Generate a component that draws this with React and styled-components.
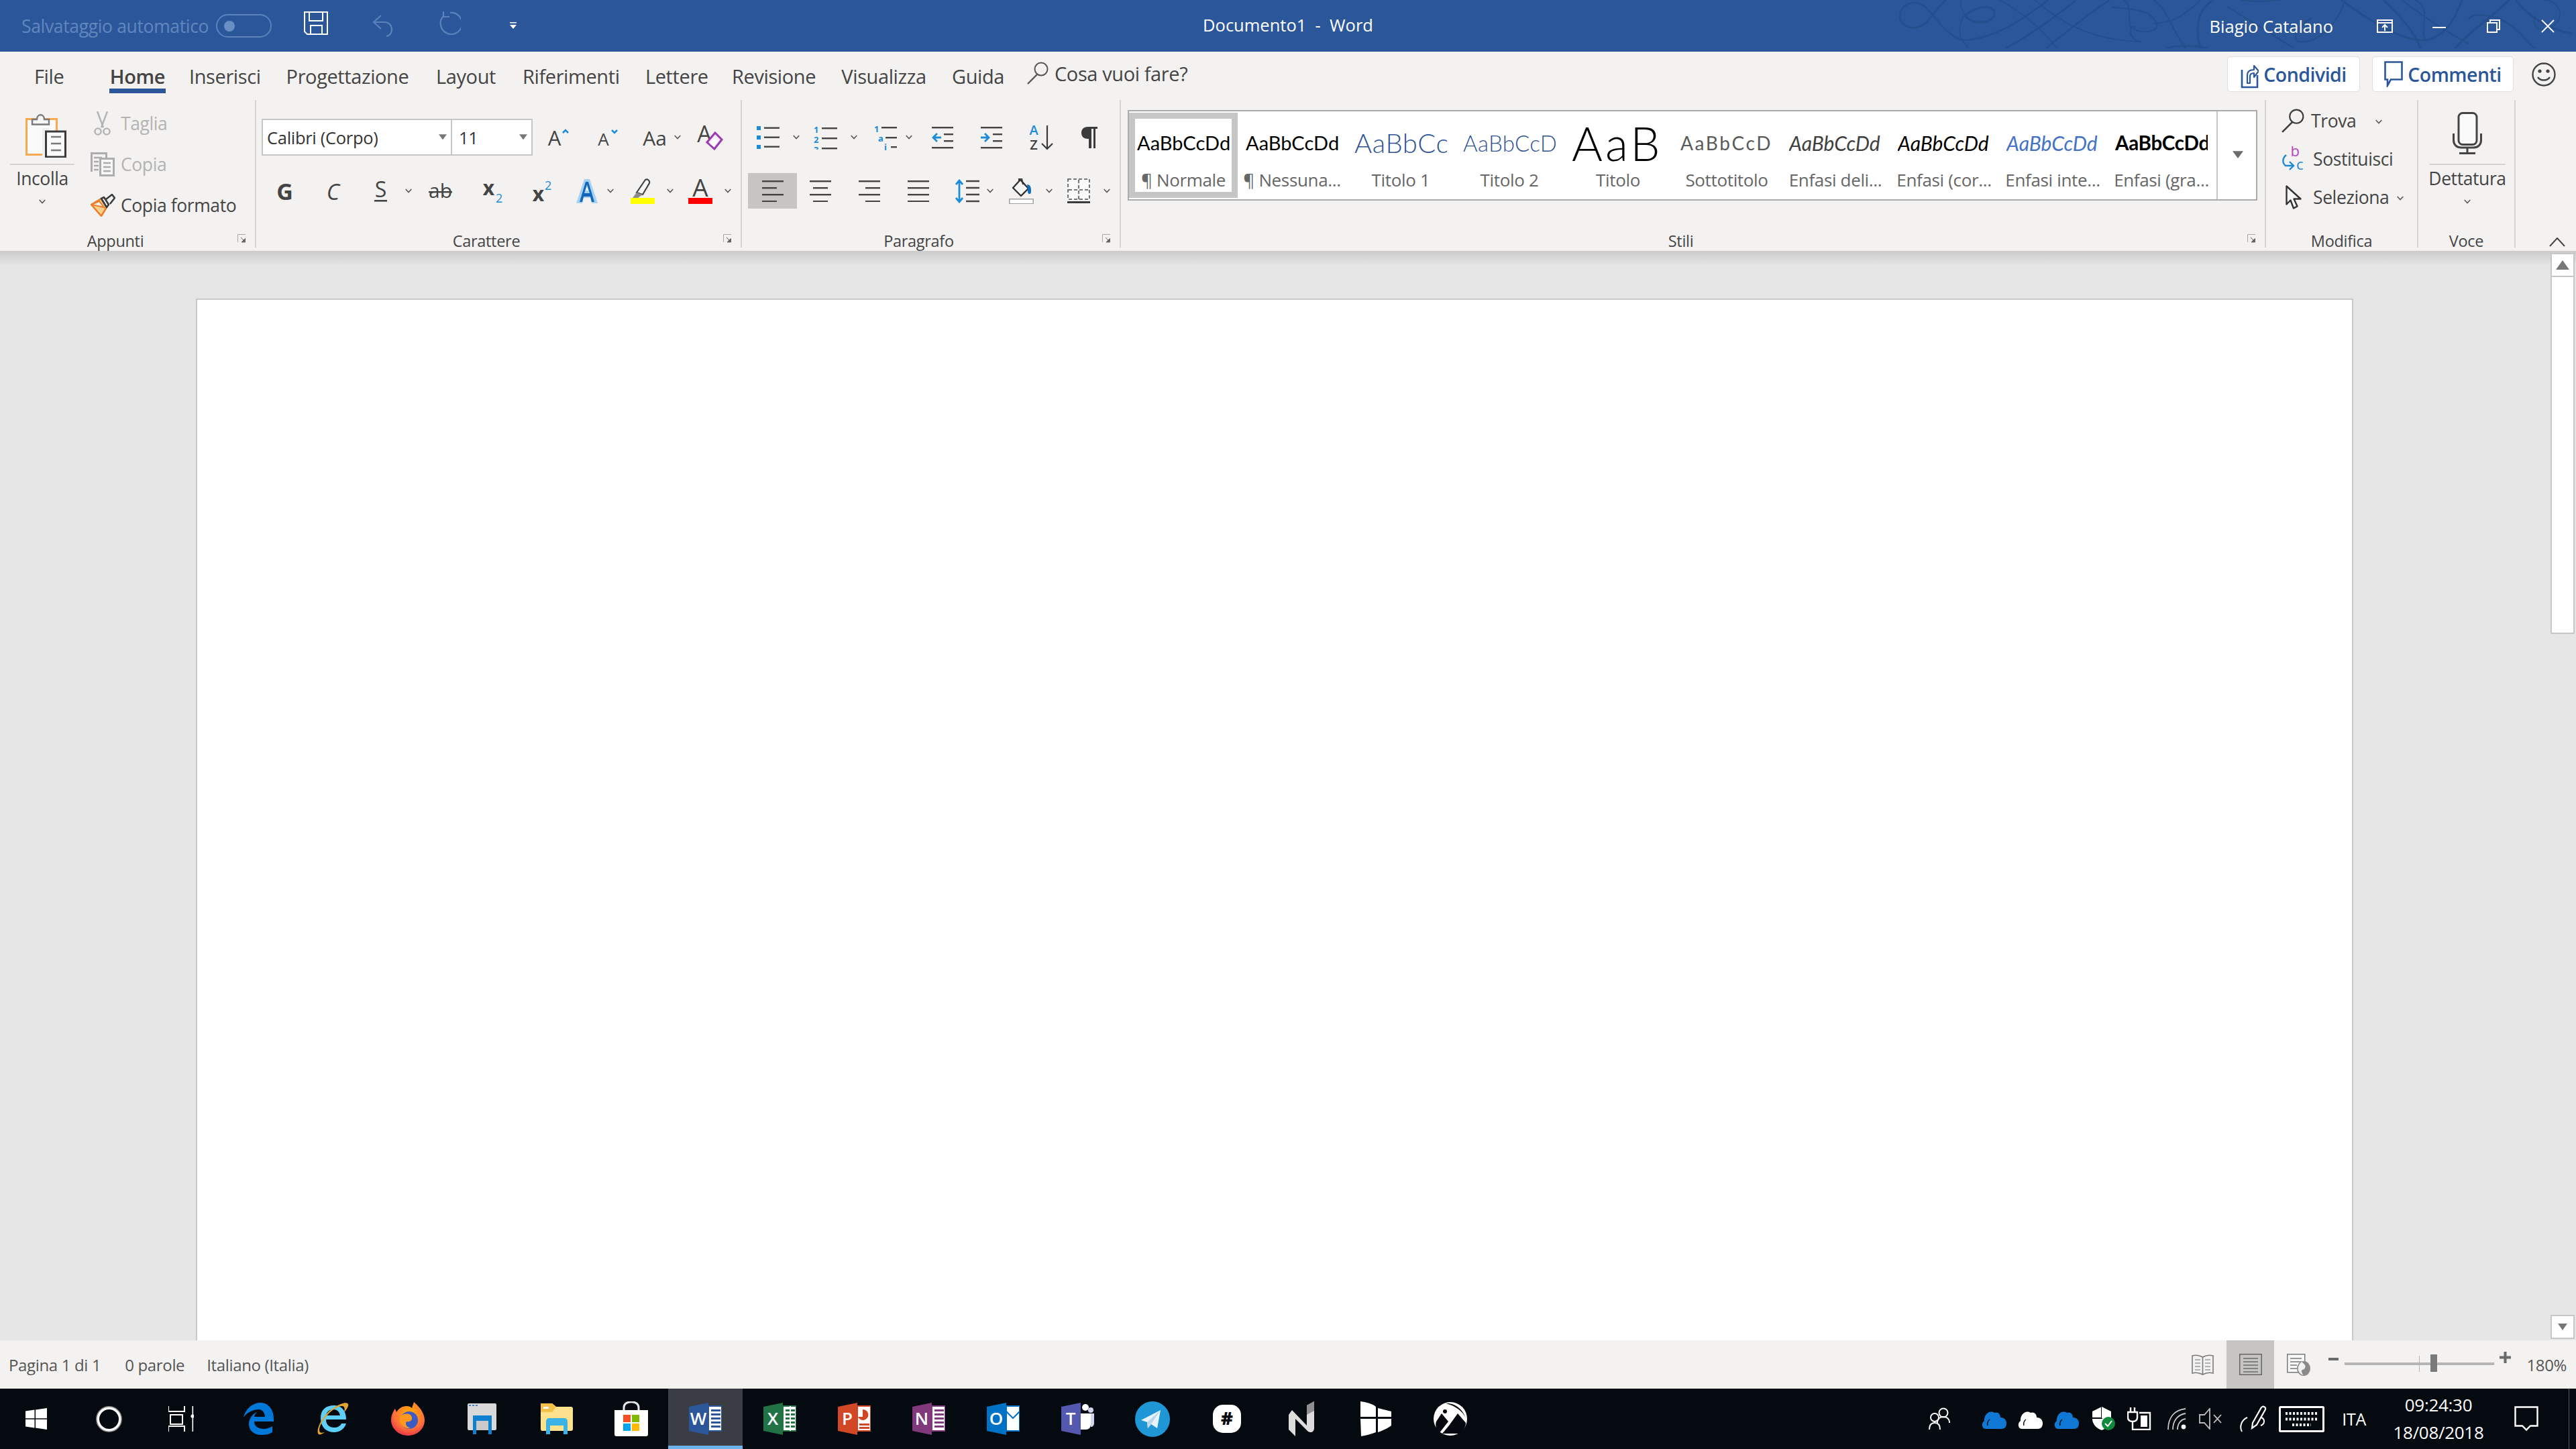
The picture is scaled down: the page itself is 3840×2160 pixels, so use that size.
import React from "react";
import styled, { createGlobalStyle } from "styled-components";

const UI = '"Open Sans", "Noto Sans", sans-serif';
const DOC = 'Lato, "Open Sans", sans-serif';
const BLUE = "#2b579a";
const RIBBON = "#f3f2f1";
const INK = "#444444";
const ACCENT = "#1e8bd6";

const Global = createGlobalStyle`
  html, body { margin: 0; padding: 0; background: #e6e6e6; }
  body { font-family: ${UI}; }
  svg text { font-family: ${UI}; }
`;

const Shell = styled.div`
  width: 3840px;
  height: 2160px;
  display: grid;
  grid-template-rows: 77px 297px 1fr 72px 90px;
  overflow: hidden;
`;

/* title bar */
const TitleBar = styled.header`
  position: relative;
  background: ${BLUE};
  display: grid;
  grid-template-columns: 1fr auto 1fr;
  align-items: center;
  color: #fff;
  overflow: hidden;
`;
const Watermark = styled.svg`
  position: absolute;
  left: 2800px;
  top: 0;
`;
const TitleLeft = styled.div`
  position: relative;
  display: flex;
  align-items: center;
`;
const AutoSave = styled.span`
  margin-left: 32px;
  width: 281px;
  font-size: 26.5px;
  letter-spacing: -0.35px;
  white-space: nowrap;
  color: #6187bf;
`;
const Toggle = styled.span`
  margin-left: 9px;
  width: 83px;
  height: 35px;
  box-sizing: border-box;
  border: 2px solid #5b82bb;
  border-radius: 18px;
  display: flex;
  align-items: center;
  padding-left: 10px;
  &::before {
    content: "";
    width: 16px;
    height: 16px;
    border-radius: 50%;
    background: #6a8fc4;
  }
`;
const Spot = styled.span`
  display: block;
  flex: none;
  margin-left: ${(p) => p.$ml || 0}px;
  margin-top: ${(p) => p.$mt || 0}px;
  line-height: 0;
`;
const DocTitle = styled.div`
  position: relative;
  font-size: 25.5px;
  white-space: pre;
  margin-top: -3px;
`;
const TitleRight = styled.div`
  position: relative;
  display: flex;
  align-items: center;
  justify-content: flex-end;
  padding-right: 32px;
`;
const UserName = styled.span`
  font-size: 25.5px;
  margin-right: 65px;
  white-space: nowrap;
`;

/* ribbon */
const Ribbon = styled.section`
  background: ${RIBBON};
  display: flex;
  flex-direction: column;
`;
const TabRow = styled.nav`
  height: 72px;
  display: flex;
  align-items: center;
  font-size: 29px;
  color: ${INK};
`;
const Tab = styled.span`
  position: relative;
  flex: none;
  width: ${(p) => p.$w}px;
  margin-left: ${(p) => p.$ml}px;
  text-align: center;
  white-space: nowrap;
  font-weight: ${(p) => (p.$on ? 600 : 400)};
  letter-spacing: -0.4px;
  ${(p) =>
    p.$on &&
    `&::after {
      content: "";
      position: absolute;
      left: 0;
      right: 0;
      top: 38px;
      height: 7px;
      background: ${BLUE};
    }`}
`;
const Ask = styled.span`
  display: flex;
  align-items: center;
  margin-left: 35px;
  margin-top: -8px;
  letter-spacing: -0.4px;
  white-space: nowrap;
`;
const AskText = styled.span`
  margin-left: 9px;
`;
const TabActions = styled.div`
  margin-left: auto;
  display: flex;
  align-items: center;
  padding-right: 30px;
  margin-bottom: 5px;
`;
const PillButton = styled.button`
  width: ${(p) => p.$w}px;
  height: 53px;
  margin-right: 18px;
  display: flex;
  align-items: center;
  justify-content: center;
  gap: 7px;
  padding: 0;
  background: #fff;
  border: 1px solid #e1dfdd;
  border-radius: 5px;
  color: ${BLUE};
  font: 600 28.5px ${UI};
  letter-spacing: -0.5px;
`;
const Groups = styled.div`
  height: 220px;
  display: flex;
`;
const Group = styled.div`
  position: relative;
  flex: none;
  width: ${(p) => p.$w}px;
  box-sizing: border-box;
  border-right: 2px solid #d6d4d2;
  display: flex;
  flex-direction: column;
`;
const GroupBody = styled.div`
  flex: 1;
  min-height: 0;
  display: flex;
  flex-direction: ${(p) => (p.$col ? "column" : "row")};
  padding-top: ${(p) => p.$top || 0}px;
`;
const GroupLabel = styled.div`
  height: 20px;
  line-height: 20px;
  font-size: 23.5px;
  letter-spacing: -0.3px;
  color: ${INK};
  text-align: center;
  padding-right: ${(p) => (p.$plain ? 0 : 36)}px;
`;
const Launcher = styled.svg`
  position: absolute;
  right: 13px;
  bottom: 7px;
`;
const LargeButton = styled.div`
  flex: none;
  width: ${(p) => p.$w}px;
  margin-left: ${(p) => p.$ml}px;
  display: flex;
  flex-direction: column;
  align-items: center;
  padding-top: ${(p) => p.$top}px;
`;
const LargeRule = styled.div`
  align-self: stretch;
  height: 2px;
  background: #d6d4d2;
  margin-top: ${(p) => p.$mt}px;
`;
const LargeText = styled.div`
  height: 42px;
  line-height: 40px;
  font-size: 26.5px;
  letter-spacing: -0.4px;
  color: ${INK};
  margin-bottom: 9px;
`;
const SmallColumn = styled.div`
  margin-left: ${(p) => p.$ml}px;
  padding-top: ${(p) => p.$top}px;
  display: flex;
  flex-direction: column;
`;
const SmallRow = styled.div`
  height: ${(p) => p.$h}px;
  display: flex;
  align-items: center;
  font-size: 26.5px;
  letter-spacing: -0.4px;
  white-space: nowrap;
  color: ${(p) => (p.$off ? "#b3b3b3" : INK)};
`;
const SmallSlot = styled.span`
  width: ${(p) => p.$w}px;
  flex: none;
  display: flex;
  align-items: center;
`;
const ToolRow = styled.div`
  height: ${(p) => p.$h}px;
  margin-bottom: ${(p) => p.$mb || 0}px;
  display: flex;
  align-items: center;
`;
const Combo = styled.div`
  flex: none;
  box-sizing: border-box;
  width: ${(p) => p.$w}px;
  height: 55px;
  margin-left: ${(p) => p.$ml || 0}px;
  background: #fff;
  border: 2px solid #c6c6c6;
  border-left-width: ${(p) => (p.$joined ? 0 : 2)}px;
  display: flex;
  align-items: center;
  justify-content: space-between;
  padding: 0 6px 0 ${(p) => p.$pad}px;
  font-size: 25.5px;
  letter-spacing: -0.3px;
  color: #333;
`;
const ActiveTool = styled.div`
  flex: none;
  width: 73px;
  height: 53px;
  margin-left: 9px;
  background: #c6c5c2;
  display: flex;
  align-items: center;
  justify-content: center;
`;
const Gallery = styled.div`
  flex: none;
  box-sizing: border-box;
  width: 1684px;
  height: 135px;
  margin: 15px 0 0 10px;
  background: #fff;
  border: 2px solid #ababab;
  display: flex;
  align-items: center;
`;
const StyleCard = styled.div`
  flex: none;
  width: 162px;
  height: 127px;
  display: flex;
  flex-direction: column;
  align-items: center;
  box-shadow: ${(p) => (p.$on ? "inset 0 0 0 9px #c6c6c6" : "none")};
`;
const StylePreview = styled.div`
  width: 138px;
  height: 90px;
  line-height: 90px;
  overflow: hidden;
  white-space: nowrap;
  font-family: ${DOC};
  font-size: ${(p) => p.$size}px;
  font-weight: ${(p) => p.$weight};
  font-style: ${(p) => (p.$italic ? "italic" : "normal")};
  color: ${(p) => p.$color};
  letter-spacing: ${(p) => p.$track}px;
`;
const StyleName = styled.div`
  height: 22px;
  line-height: 20px;
  font-size: 26px;
  letter-spacing: -0.35px;
  color: #666;
  white-space: nowrap;
`;
const GalleryMore = styled.div`
  flex: none;
  margin-left: 1px;
  width: 59px;
  align-self: stretch;
  border-left: 2px solid #c6c6c6;
  display: flex;
  align-items: center;
  justify-content: center;
  padding-bottom: 2px;
`;
const RibbonEnd = styled.div`
  flex: 1;
  display: flex;
  align-items: flex-end;
  padding: 0 0 1px 50px;
`;

/* document area */
const Workspace = styled.main`
  min-height: 0;
  display: flex;
  background: linear-gradient(#cbcbcb, #e6e6e6 22px);
`;
const Canvas = styled.div`
  flex: 1;
  min-width: 0;
  padding: 71px 0 0 292px;
  display: flex;
`;
const Page = styled.div`
  width: 3216px;
  box-sizing: border-box;
  background: #fff;
  border: 2px solid #c9c9c9;
  border-bottom: 0;
`;
const ScrollBar = styled.div`
  flex: none;
  width: 36px;
  margin: 3px 2px 2px 0;
  display: flex;
  flex-direction: column;
`;
const ScrollButton = styled.div`
  height: 36px;
  box-sizing: border-box;
  background: #fff;
  border: 2px solid #c6c6c6;
  display: flex;
  align-items: center;
  justify-content: center;
`;
const ScrollThumb = styled.div`
  height: 532px;
  box-sizing: border-box;
  background: #fff;
  border: 2px solid #c6c6c6;
  border-top: 0;
`;
const ScrollTrack = styled.div`
  flex: 1;
`;

/* status bar */
const StatusBar = styled.footer`
  background: ${RIBBON};
  display: flex;
  align-items: center;
  font-size: 24px;
  letter-spacing: -0.35px;
  color: #555;
`;
const StatusText = styled.span`
  margin-left: ${(p) => p.$ml}px;
  white-space: nowrap;
`;
const StatusRight = styled.div`
  margin-left: auto;
  height: 100%;
  display: flex;
  align-items: center;
  padding-right: 14px;
`;
const ViewActive = styled.div`
  width: 71px;
  height: 100%;
  margin-left: 19px;
  background: #c6c5c2;
  display: flex;
  align-items: center;
  justify-content: center;
`;
const Slider = styled.div`
  position: relative;
  width: 223px;
  height: 4px;
  margin-left: 9px;
  margin-top: -2px;
  background: #b5b5b5;
`;
const SliderMark = styled.span`
  position: absolute;
  left: 111px;
  top: -10px;
  width: 1px;
  height: 24px;
  background: #b5b5b5;
`;
const SliderThumb = styled.span`
  position: absolute;
  left: 128px;
  top: -12px;
  width: 10px;
  height: 26px;
  background: #7a7a7a;
`;
const Percent = styled.span`
  margin-left: 23px;
`;

/* taskbar */
const TaskBar = styled.div`
  position: relative;
  background: #050a10;
  display: flex;
  align-items: center;
  color: #fff;
`;
const TaskCell = styled.div`
  flex: none;
  width: ${(p) => p.$w || 111}px;
  height: 100%;
  box-sizing: border-box;
  display: flex;
  align-items: center;
  justify-content: center;
  background: ${(p) => (p.$on ? "#3a3d44" : "transparent")};
  border-bottom: ${(p) => (p.$on ? "5px solid #6db2ea" : "0")};
  padding-top: ${(p) => (p.$on ? 5 : 0)}px;
`;
const AppRow = styled.div`
  height: 100%;
  display: flex;
  margin-left: 6px;
`;
const Tray = styled.div`
  margin-left: auto;
  display: flex;
  align-items: center;
  height: 100%;
  border-right: 1px solid #55585e;
  margin-right: 10px;
  box-sizing: border-box;
`;
const TrayText = styled.span`
  margin-left: ${(p) => p.$ml}px;
  font-size: 25px;
  letter-spacing: -0.3px;
`;
const Clock = styled.div`
  margin-left: 38px;
  width: 140px;
  height: 100%;
  display: flex;
  flex-direction: column;
  align-items: center;
  justify-content: center;
  gap: 10px;
  font-size: 26px;
  line-height: 31px;
  letter-spacing: -0.3px;
  white-space: nowrap;
`;

/* drawings */
const Chevron = ({ ml = 0, color = "#555" }) => (
  <Spot $ml={ml}>
    <svg width="10" height="7" viewBox="0 0 10 7">
      <path d="M.7 1 5 5.6 9.3 1" fill="none" stroke={color} strokeWidth="1.5" />
    </svg>
  </Spot>
);
const Caret = ({ size = 12, color = "#777" }) => (
  <svg width={size} height={size * 0.7} viewBox="0 0 12 8">
    <path d="M0 0h12L6 8z" fill={color} />
  </svg>
);
const LaunchIcon = () => (
  <Launcher width="13" height="13" viewBox="0 0 13 13">
    <path d="M.5 12V.5H12" fill="none" stroke="#a8a8a8" />
    <path d="M5 5l5 5M11.5 6.5v5.5H6z" stroke="#666" fill="#666" />
  </Launcher>
);
const Lines = ({ rows, h = 30, color = "#444" }) => (
  <>
    {rows.map(([x1, x2], i) => (
      <rect key={i} x={x1} y={(i * (h - 2)) / (rows.length - 1)} width={x2 - x1} height="2.4" fill={color} />
    ))}
  </>
);
const AlignIcon = ({ rows }) => (
  <svg width="32" height="32" viewBox="0 0 32 32">
    <Lines rows={rows} h={32} />
  </svg>
);

const PasteIcon = () => (
  <svg width="62" height="67" viewBox="0 0 62 67">
    <rect x="1.5" y="9.5" width="45" height="53" fill="#fafafa" stroke="#fba94f" strokeWidth="3" />
    <path d="M10 17.5V10h7c0-9 11-9 11 0h7v7.500z" fill="#f5f5f5" stroke="#7a7a7a" strokeWidth="2.4" />
    <rect x="25" y="23" width="10" height="44" fill="#f0f0f0" />
    <rect x="30.5" y="28" width="29" height="38" fill="#fafafa" stroke="#3b3b3b" strokeWidth="3" />
    <path d="M38 36h15M38 46h15M38 56h15" stroke="#7a7a7a" strokeWidth="2.4" />
  </svg>
);
const CutIcon = () => (
  <svg width="25" height="36" viewBox="0 0 25 36">
    <path d="M5 0l9 24M20 0l-9 24" fill="none" stroke="#b3b3b3" strokeWidth="2.4" />
    <circle cx="6" cy="30" r="4.6" fill="none" stroke="#b3b3b3" strokeWidth="2.4" />
    <circle cx="19" cy="30" r="4.6" fill="none" stroke="#b3b3b3" strokeWidth="2.4" />
  </svg>
);
const CopyIcon = () => (
  <svg width="36" height="36" viewBox="0 0 36 36">
    <path d="M1.5 29V1.5h22v7" fill="none" stroke="#adadad" strokeWidth="3" />
    <path d="M5 8h12M5 14h7M5 20h7M5 26h7" stroke="#adadad" strokeWidth="2.4" />
    <rect x="14.5" y="9.5" width="20" height="25" fill="#f7f7f7" stroke="#adadad" strokeWidth="3" />
    <path d="M19 16h11M19 22h11M19 28h11" stroke="#adadad" strokeWidth="2.4" />
  </svg>
);
const BrushIcon = () => (
  <svg width="37" height="34" viewBox="0 0 37 34">
    <path d="M1 16 16 7l8 13-8 13z" fill="#fbd28c" stroke="#ee7d2b" strokeWidth="2.6" strokeLinejoin="round" />
    <path d="M1 16 13 11l7 9z" fill="#f3f2f1" stroke="#ee7d2b" strokeWidth="2" />
    <path d="M16 7l4-2 7 11-3 4zM23 8l9-7 4 5-7 9" fill="#f3f2f1" stroke="#3b3b3b" strokeWidth="2.6" strokeLinejoin="round" />
  </svg>
);
const GlyphIcon = ({ w, h, size, y, weight = 400, italic, color = "#444", children, extra }) => (
  <svg width={w} height={h} viewBox={`0 0 ${w} ${h}`} style={{ overflow: "visible" }}>
    <text x={w / 2} y={y} textAnchor="middle" fontSize={size} fontWeight={weight} fontStyle={italic ? "italic" : "normal"} fill={color}>
      {children}
    </text>
    {extra}
  </svg>
);
const BulletIcon = () => (
  <svg width="34" height="34" viewBox="0 0 34 34">
    {[0, 14, 28].map((y) => (
      <g key={y}>
        <rect y={y} width="6" height="6" fill={ACCENT} />
        <rect x="11" y={y + 1.5} width="23" height="2.4" fill="#444" />
      </g>
    ))}
  </svg>
);
const NumberIcon = () => (
  <svg width="35" height="36" viewBox="0 0 35 36">
    {["1", "2", "3"].map((n, i) => (
      <g key={n}>
        <text x="0" y={11 + i * 15} fontSize="13" fontWeight="700" fill={ACCENT}>{n}</text>
        <rect x="12" y={3 + i * 15} width="23" height="2.4" fill="#444" />
      </g>
    ))}
  </svg>
);
const MultiIcon = () => (
  <svg width="34" height="38" viewBox="0 0 34 38">
    <text x="0" y="11" fontSize="13" fontWeight="700" fill={ACCENT}>1</text>
    <rect x="11" y="3" width="23" height="2.4" fill="#444" />
    <text x="6" y="25" fontSize="13" fontWeight="700" fill={ACCENT}>a</text>
    <rect x="17" y="18" width="17" height="2.4" fill="#444" />
    <text x="15" y="38" fontSize="13" fontWeight="700" fill={ACCENT}>i</text>
    <rect x="25" y="32" width="9" height="2.4" fill="#444" />
  </svg>
);
const IndentIcon = ({ out }) => (
  <svg width="32" height="34" viewBox="0 0 32 34">
    <rect width="32" height="2.4" y="1" fill="#444" />
    <rect width="32" height="2.4" y="31" fill="#444" />
    <rect x="18" y="11" width="14" height="2.4" fill="#444" />
    <rect x="18" y="21" width="14" height="2.4" fill="#444" />
    <path d={out ? "M14 17H2M8 11l-6 6 6 6" : "M0 17h12M6 11l6 6-6 6"} fill="none" stroke={ACCENT} strokeWidth="2.8" />
  </svg>
);
const SortIcon = () => (
  <svg width="37" height="38" viewBox="0 0 37 38">
    <text x="8" y="15" textAnchor="middle" fontSize="20" fontWeight="600" fill={ACCENT}>A</text>
    <text x="8" y="37" textAnchor="middle" fontSize="20" fontWeight="600" fill="#3b3b3b">Z</text>
    <path d="M28 1v35M20 28l8 8 8-8" fill="none" stroke="#3b3b3b" strokeWidth="2.2" />
  </svg>
);
const PilcrowIcon = () => (
  <svg width="24" height="32" viewBox="0 0 24 32">
    <path d="M24 0H10C3 0 0 4 0 9s3 9 10 9h1v14h4V3h3v29h3V3h3z" fill="#3b3b3b" />
  </svg>
);
const LineSpaceIcon = () => (
  <svg width="36" height="36" viewBox="0 0 36 36">
    <path d="M6 3v30M1 8l5-6 5 6M1 28l5 6 5-6" fill="none" stroke={ACCENT} strokeWidth="2.8" />
    <path d="M16 3h20M16 13h20M16 23h20M16 33h20" stroke="#444" strokeWidth="2.4" />
  </svg>
);
const ShadeIcon = () => (
  <svg width="37" height="38" viewBox="0 0 37 38">
    <path d="M6 14 17 2l12 13-11 11z" fill="#f7f7f7" stroke="#333" strokeWidth="2.4" strokeLinejoin="round" />
    <path d="M15 4V0h4l2 9" fill="none" stroke="#333" strokeWidth="2" />
    <path d="M27 9c5 0 6 4 6 9s-1 5-3 5-2-4-2-7z" fill="#106ebe" />
    <rect x=".75" y="30.75" width="35.5" height="7" fill="#fff" stroke="#a0a0a0" strokeWidth="1.5" />
  </svg>
);
const BorderIcon = () => (
  <svg width="34" height="38" viewBox="0 0 34 38">
    <rect x="1" y="1" width="32" height="30" fill="#fafafa" stroke="#777" strokeWidth="2.2" strokeDasharray="5 3" />
    <path d="M17 2v30M2 17h30" stroke="#777" strokeWidth="2.2" strokeDasharray="5 3" />
    <rect y="34" width="34" height="3" fill="#3b3b3b" />
  </svg>
);
const EraseIcon = () => (
  <svg width="37" height="38" viewBox="0 0 37 38" style={{ overflow: "visible" }}>
    <text x="10" y="26" textAnchor="middle" fontSize="34" fill="#444">A</text>
    <path d="M14 26 26 12l10 10-11 14z" fill="#f7eef9" stroke="#9a3cb0" strokeWidth="3" />
    <path d="M18 28l7-8 5 5-6 8z" fill="#fff" />
  </svg>
);
const TextFx = () => (
  <svg width="34" height="36" viewBox="0 0 34 36">
    <path d="M1 36 13 0h8l12 36h-9l-2-8H12l-2 8z" fill="#a6d1f3" />
    <path d="M6 34 15 4h4l9 30h-4l-2-8H12l-2 8zM13 21h8l-4-13z" fill="#1267b8" />
    <path d="M15 17h4l-2-6z" fill="#fff" />
  </svg>
);
const MarkerIcon = () => (
  <svg width="36" height="38" viewBox="0 0 36 38">
    <path d="M9 21 22 2c3-2 7 1 6 5L18 24z" fill="#f7f7f7" stroke="#444" strokeWidth="2.2" />
    <path d="M9 21l9 3-7 5H3z" fill="#8c8c8c" />
    <rect y="29" width="36" height="9" fill="#ffff00" />
  </svg>
);
const ColorA = () => (
  <svg width="36" height="38" viewBox="0 0 36 38">
    <text x="18" y="27" textAnchor="middle" fontSize="37" fill="#444">A</text>
    <rect y="29" width="36" height="9" fill="#ff0000" />
  </svg>
);
const SearchIcon = ({ w = 32, h = 34, color = "#555" }) => (
  <svg width={w} height={h} viewBox="0 0 32 34">
    <circle cx="21" cy="11" r="9.5" fill="none" stroke={color} strokeWidth="2" />
    <path d="M15 19 1 33" stroke={color} strokeWidth="2.4" />
  </svg>
);
const ReplaceIcon = () => (
  <svg width="33" height="37" viewBox="0 0 33 37">
    <text x="20" y="15" textAnchor="middle" fontSize="22" fill="#b146c2">b</text>
    <text x="27" y="35" textAnchor="middle" fontSize="22" fill={ACCENT}>c</text>
    <path d="M7 13C1 18 1 25 6 29h12M12 23l6 6-6 6" fill="none" stroke={ACCENT} strokeWidth="2.4" />
  </svg>
);
const ArrowIcon = () => (
  <svg width="25" height="36" viewBox="0 0 25 36">
    <path d="M1.5 1.5v27l6-6 4.500 12 5.500-3-5-11h10z" fill="#f7f7f7" stroke="#333" strokeWidth="2.4" strokeLinejoin="round" />
  </svg>
);
const MicIcon = () => (
  <svg width="44" height="63" viewBox="0 0 44 63">
    <rect x="9" y="1.5" width="27" height="47" rx="6" fill="#fafafa" stroke="#444" strokeWidth="3" />
    <path d="M1.5 32v10c0 7 5 11 11 11h19c6 0 11-4 11-11V32M22 53v9M10 61.5h24" fill="none" stroke="#444" strokeWidth="3" />
  </svg>
);
const ShareIcon = () => (
  <svg width="27" height="42" viewBox="0 0 27 42">
    <path d="M2 14v26h23V22" fill="none" stroke={BLUE} strokeWidth="2.6" />
    <path d="M10 34V22c0-6 4-8 10-8V8l7 8-7 9v-6c-4 0-6 2-6 5v10z" fill="#fff" stroke={BLUE} strokeWidth="2.2" strokeLinejoin="round" />
  </svg>
);
const CommentIcon = () => (
  <svg width="28" height="39" viewBox="0 0 28 39">
    <path d="M1.5 1.5h25v26H10l-5 9v-9H1.5z" fill="#fff" stroke={BLUE} strokeWidth="2.6" />
  </svg>
);
const SmileIcon = () => (
  <svg width="36" height="36" viewBox="0 0 36 36">
    <circle cx="18" cy="18" r="16.5" fill="none" stroke="#444" strokeWidth="2.4" />
    <circle cx="12" cy="13" r="2.6" fill="#444" />
    <circle cx="24" cy="13" r="2.6" fill="#444" />
    <path d="M9 22c4 6 14 6 18 0" fill="none" stroke="#444" strokeWidth="2.4" />
  </svg>
);

const TitleSwirls = () => (
  <Watermark width="1040" height="72" viewBox="0 0 1040 72" fill="none" stroke="#254e8c">
    <path strokeWidth="2.5" d="M100 0C85 15 80 25 72 33 60 44 40 45 33 30 28 15 42 3 55 4c15 1 23 16 30 23 10 13 25 28 40 33" />
    <path strokeWidth="1.5" d="M123 0c-1 10 3 18 6 22-8 10-10 30-4 38 3 4 6 8 10 12" />
    <path strokeWidth="3" d="M129 24c10-12 40-20 44-6 3 12-20 20-35 12-4-2-7-4-9-6" />
    <path strokeWidth="2.5" d="M122 60c40 0 80-20 131-60M190 72c40-22 80-52 105-72M250 72c40-32 70-57 95-72" />
    <path strokeWidth="1.6" d="M180 0c30 15 60 40 87 72M233 0c37 30 77 60 160 62" />
    <path strokeWidth="2" d="M347 10c23 5 58 0 68 25 3 15-25 15-37 7-8-4 2-37-13-42" />
    <path strokeWidth="2" d="M393 62c-14 0-20-14-16-20 2-3 5-3 6 0M410 0c20 10 30 50 48 72M410 35c30 0 50-15 70-35" />
    <path strokeWidth="3" d="M500 0c-20 10-30 35-20 72M430 72c15-5 40-5 60 0" />
    <path strokeWidth="2" d="M520 10c50 30 80 50 100 62M540 0c30 5 60 0 80-5M646 27c-20 10-30 30-20 35 30 5 60-30 70-62" />
    <path strokeWidth="3" d="M753 0c27 25 47 50 55 72M690 0c40 30 90 60 120 60 30 0 50-30 60-60" />
    <path strokeWidth="2" d="M780 0c40 30 70 50 100 65M820 62c-20-10 10-50-20-62M880 30c0-10 30-10 50 0 30 15 40 40 50 42" />
    <path strokeWidth="3" d="M860 72c20-25 60-50 80-72M950 0c20 25 50 45 85 50" />
    <path strokeWidth="1.6" d="M990 0c20-2 35 20 20 35-15 15-40 10-30-12" />
  </Watermark>
);

const Pane = ({ fill, w = 20, h = 37, children }) => (
  <g transform="translate(29 5)">
    <rect width={w} height={h} fill="#fff" stroke={fill} strokeWidth="2" />
    {children}
  </g>
);
const OfficeIcon = ({ fill, letter, children }) => (
  <svg width="49" height="48" viewBox="0 0 49 48">
    {children}
    <path d="M0 6 29 0v48L0 42z" fill={fill} />
    <text x="14" y="33" textAnchor="middle" fontSize="26" fontWeight="600" fill="#fff">{letter}</text>
  </svg>
);
const docLines = (c) => (
  <g fill={c}>
    {[5, 11, 17, 23, 29].map((y) => (
      <rect key={y} x="4" y={y} width="14" height="3" />
    ))}
  </g>
);

const AppIcons = [
  ["edge", <svg key="e" width="45" height="48" viewBox="0 0 45 48"><path d="M0 22C3 8 15 0 25 0c12 0 20 10 20 24v4H16c0 7 6 11 14 11 5 0 10-2 13-4v9c-5 3-10 4-16 4-13 0-19-8-19-16 0-8 5-15 12-18-4 4-4 7-4 7h16c0-6-4-11-9-11C13 10 4 16 0 22z" fill="#0078d7" /></svg>],
  ["ie", <svg key="i" width="49" height="48" viewBox="0 0 49 48"><path d="M41 25H14c0 8 5 12 12 12 5 0 9-2 11-6h7c-3 9-10 13-18 13-12 0-20-8-20-21S14 4 26 4c12 0 18 9 18 21zM14 19h21c-1-6-5-9-10-9s-10 3-11 9z" fill="#5ed0f8" /><path d="M3 47C-2 43 6 22 22 10 34 1 45-2 47 2c1 3-2 8-6 12 1-5 1-8-2-9-6-1-18 6-26 17C6 31 2 40 5 44c1 1 4 1 7 0-4 3-8 4-9 3z" fill="#e0a531" /></svg>],
  ["firefox", <svg key="f" width="50" height="50" viewBox="0 0 50 50"><defs><radialGradient id="fx" cx=".55" cy=".35" r=".75"><stop offset="0" stopColor="#ffb000" /><stop offset=".6" stopColor="#ff7139" /><stop offset="1" stopColor="#e3204e" /></radialGradient></defs><path d="M34 0c12 10 16 20 16 27 0 13-11 23-25 23S0 39 0 27C0 20 3 14 6 10l2 5c3-5 8-9 15-9 4 0 6 1 8 3z" fill="url(#fx)" /><circle cx="27" cy="27" r="13" fill="#3d5bc4" /><path d="M16 20c5-4 14-3 15 3 1 5-4 7-8 6-3 4 1 9 6 10-8 2-16-5-16-12 0-3 1-5 3-7z" fill="#ff9a1f" /></svg>],
  ["archive", <svg key="a" width="43" height="46" viewBox="0 0 43 46"><rect y="0" width="43" height="40" rx="2" fill="#d9d9d9" /><path d="M2 2h3v2H2zM7 2h3v2H7zM12 2h3v2h-3z" fill="#4f81bd" /><path d="M8 46V18h28v28h-5V26H13v20z" fill="#0f7fd0" /><rect x="13" y="26" width="18" height="14" fill="#c9c9c9" /></svg>],
  ["explorer", <svg key="x" width="48" height="46" viewBox="0 0 48 46"><path d="M0 4c0-2 1-4 3-4h14l6 5h22c2 0 3 1 3 3v30c0 2-1 3-3 3H2c-1 0-2-1-2-3z" fill="#fde18d" /><path d="M0 0h17l6 5-6 8H0z" fill="#f4c24b" /><rect x="4" y="5" width="8" height="3" fill="#fff" /><path d="M8 46V27c0-3 2-5 5-5h22c3 0 5 2 5 5v19h-6V33H14v13z" fill="#3bb3e6" /><rect x="14" y="33" width="20" height="8" fill="#fde18d" /></svg>],
  ["store", <svg key="s" width="52" height="52" viewBox="0 0 52 52"><path d="M15 14V9c0-11 22-11 22 0v5" fill="none" stroke="#e8e8e8" strokeWidth="3" /><path d="M1 13h50v36c0 2-1 3-3 3H4c-2 0-3-1-3-3z" fill="#fff" /><rect x="14" y="20" width="11" height="11" fill="#f25022" /><rect x="27" y="20" width="11" height="11" fill="#7fba00" /><rect x="14" y="33" width="11" height="11" fill="#00a4ef" /><rect x="27" y="33" width="11" height="11" fill="#ffb900" /></svg>],
  ["word", <OfficeIcon key="w" fill="#2b579a" letter="W"><Pane fill="#2b579a">{docLines("#2b579a")}</Pane></OfficeIcon>, true],
  ["excel", <OfficeIcon key="xl" fill="#217346" letter="X"><Pane fill="#217346">{docLines("#217346")}<path d="M11 0v37" stroke="#fff" strokeWidth="2" /></Pane></OfficeIcon>],
  ["ppt", <OfficeIcon key="p" fill="#d24726" letter="P"><Pane fill="#d24726"><path d="M8 5a8 8 0 1 1-7 11h7z" fill="#d24726" /><rect x="3" y="26" width="15" height="3" fill="#d24726" /><rect x="3" y="31" width="15" height="3" fill="#d24726" /></Pane></OfficeIcon>],
  ["onenote", <OfficeIcon key="n" fill="#80397b" letter="N"><Pane fill="#80397b">{docLines("#80397b")}</Pane></OfficeIcon>],
  ["outlook", <OfficeIcon key="o" fill="#0072c6" letter="O"><Pane fill="#0072c6"><path d="M0 8l10 10L20 8" fill="none" stroke="#0072c6" strokeWidth="2" /></Pane></OfficeIcon>],
  ["teams", <OfficeIcon key="t" fill="#5558af" letter="T"><circle cx="36" cy="7" r="5" fill="#fff" /><circle cx="44" cy="11" r="4" fill="#d4d5ec" /><path d="M29 16h15v16c0 5-3 8-7 8h-8z" fill="#fff" /><path d="M44 16h5v14c0 4-2 6-5 6z" fill="#d4d5ec" /></OfficeIcon>],
  ["telegram", <svg key="tg" width="52" height="53" viewBox="0 0 52 53"><ellipse cx="26" cy="26.5" rx="26" ry="26.5" fill="#1f97d6" /><path d="M9 28 38 13l-5 27-9-6-5 6-1-9z" fill="#e8f3fa" /><path d="M18 31l20-18-14 21-5 6z" fill="#bcd9ea" /></svg>],
  ["slack", <svg key="sl" width="42" height="42" viewBox="0 0 42 42"><rect width="42" height="42" rx="15" fill="#fff" /><text x="21" y="30" textAnchor="middle" fontSize="27" fontWeight="800" fill="#05090f">#</text></svg>],
  ["notion", <svg key="nt" width="38" height="52" viewBox="0 0 38 52"><path d="M0 20l5-7 22 23V6L38 0v40c0 6-6 8-10 4L10 26v26L0 42z" fill="#dcdcdc" /><path d="M27 6 38 0v14L27 20z" fill="#8f8f8f" /></svg>],
  ["app", <svg key="pp" width="46" height="52" viewBox="0 0 46 52"><path d="M0 0c9 1 20 5 23 8v15H0zM0 26h23v20c-7 3-16 5-22 6zM26 10l20 5v8H26zM26 26h20v10c-5 4-14 8-20 10z" fill="#fff" /></svg>],
  ["mountain", <svg key="m" width="54" height="52" viewBox="0 0 54 52"><circle cx="27" cy="26" r="25" fill="#fff" /><path d="M6 30l8-12 10 12-14 18c-4-5-6-12-4-18zM25 36l13-18 12 14c0 6-4 12-9 16H15z" fill="#05090f" /><path d="M20 3c15-1 26 10 30 22-4-10-16-19-30-22z" fill="#05090f" /><circle cx="19" cy="15" r="3" fill="#05090f" /></svg>],
];

const Styles = [
  ["AaBbCcDd", "¶ Normale", { $size: 29, $weight: 400, $color: "#000", $track: 0 }, true],
  ["AaBbCcDd", "¶ Nessuna...", { $size: 29, $weight: 400, $color: "#000", $track: 0 }],
  ["AaBbCc", "Titolo 1", { $size: 40, $weight: 300, $color: "#2f5496", $track: 0.6 }],
  ["AaBbCcD", "Titolo 2", { $size: 33, $weight: 300, $color: "#2f5496", $track: 0.3 }],
  ["AaB", "Titolo", { $size: 70, $weight: 300, $color: "#000", $track: 4 }],
  ["AaBbCcD", "Sottotitolo", { $size: 28, $weight: 400, $color: "#5a5a5a", $track: 2.6 }],
  ["AaBbCcDd", "Enfasi deli...", { $size: 30, $weight: 400, $italic: true, $color: "#404040", $track: 0 }],
  ["AaBbCcDd", "Enfasi (cor...", { $size: 30, $weight: 400, $italic: true, $color: "#000", $track: 0 }],
  ["AaBbCcDd", "Enfasi inte...", { $size: 30, $weight: 400, $italic: true, $color: "#4472c4", $track: 0 }],
  ["AaBbCcDd", "Enfasi (gra...", { $size: 29.5, $weight: 700, $color: "#000", $track: -0.3 }],
];

const Tabs = [
  ["File", 43, 51],
  ["Home", 84, 69, true],
  ["Inserisci", 104, 35],
  ["Progettazione", 184, 40],
  ["Layout", 89, 40],
  ["Riferimenti", 142, 40],
  ["Lettere", 90, 41],
  ["Revisione", 123, 39],
  ["Visualizza", 127, 40],
  ["Guida", 77, 38],
];

export default function App() {
  return (
    <>
      <Global />
      <Shell>
        <TitleBar>
          <TitleSwirls />
          <TitleLeft>
            <AutoSave>Salvataggio automatico</AutoSave>
            <Toggle />
            <Spot $ml={48} $mt={-8}>
              <svg width="36" height="35" viewBox="0 0 36 35">
                <path d="M1 1h34v33H5l-4-4z" fill="none" stroke="#fff" strokeWidth="2" />
                <path d="M8 1v13h20V1M10 34V21h17v13" fill="none" stroke="#fff" strokeWidth="2" />
              </svg>
            </Spot>
            <Spot $ml={66} $mt={0}>
              <svg width="31" height="33" viewBox="0 0 31 33">
                <path d="M13 1 2 11l11 10M2 11h16c7 0 11 5 11 11s-3 9-8 10" fill="none" stroke="#5b82bb" strokeWidth="2.2" />
              </svg>
            </Spot>
            <Spot $ml={65} $mt={-8}>
              <svg width="36" height="35" viewBox="0 0 36 35">
                <path d="M10 7a16 16 0 1 0 10-5M10 0v8h9" fill="none" stroke="#5b82bb" strokeWidth="2.2" />
              </svg>
            </Spot>
            <Spot $ml={73} $mt={-1}>
              <svg width="10" height="10" viewBox="0 0 10 10">
                <path d="M0 0h10v1.6H0zM0 4h10L5 10z" fill="#fff" />
              </svg>
            </Spot>
          </TitleLeft>
          <DocTitle>{"Documento1  -  Word"}</DocTitle>
          <TitleRight>
            <UserName>Biagio Catalano</UserName>
            <Spot>
              <svg width="24" height="20" viewBox="0 0 24 20">
                <rect x="1" y="1" width="22" height="18" fill="none" stroke="#fff" strokeWidth="2" />
                <path d="M1 5h22M12 17V8M8 12l4-4 4 4" fill="none" stroke="#fff" strokeWidth="2" />
              </svg>
            </Spot>
            <Spot $ml={59}>
              <svg width="20" height="2" viewBox="0 0 20 2">
                <rect width="20" height="2" fill="#fff" />
              </svg>
            </Spot>
            <Spot $ml={61}>
              <svg width="20" height="20" viewBox="0 0 20 20">
                <path d="M5 4V1h14v14h-3" fill="none" stroke="#fff" strokeWidth="2" />
                <rect x="1" y="5" width="14" height="14" fill="none" stroke="#fff" strokeWidth="2" />
              </svg>
            </Spot>
            <Spot $ml={61}>
              <svg width="20" height="20" viewBox="0 0 20 20">
                <path d="M1 1l18 18M19 1 1 19" stroke="#fff" strokeWidth="1.8" />
              </svg>
            </Spot>
          </TitleRight>
        </TitleBar>

        <Ribbon>
          <TabRow>
            {Tabs.map(([label, w, ml, on]) => (
              <Tab key={label} $w={w} $ml={ml} $on={on}>
                {label}
              </Tab>
            ))}
            <Ask>
              <SearchIcon />
              <AskText>Cosa vuoi fare?</AskText>
            </Ask>
            <TabActions>
              <PillButton $w={198}>
                <ShareIcon />
                Condividi
              </PillButton>
              <PillButton $w={211}>
                <CommentIcon />
                Commenti
              </PillButton>
              <Spot $ml={9}>
                <SmileIcon />
              </Spot>
            </TabActions>
          </TabRow>

          <Groups>
            <Group $w={382}>
              <GroupBody>
                <LargeButton $w={96} $ml={15} $top={19}>
                  <Spot $ml={12}>
                    <PasteIcon />
                  </Spot>
                  <LargeRule $mt={9} />
                  <LargeText>Incolla</LargeText>
                  <Chevron />
                </LargeButton>
                <SmallColumn $ml={24} $top={4}>
                  <SmallRow $h={61} $off>
                    <SmallSlot $w={45}>
                      <Spot $ml={5}>
                        <CutIcon />
                      </Spot>
                    </SmallSlot>
                    Taglia
                  </SmallRow>
                  <SmallRow $h={61} $off>
                    <SmallSlot $w={45}>
                      <CopyIcon />
                    </SmallSlot>
                    Copia
                  </SmallRow>
                  <SmallRow $h={61}>
                    <SmallSlot $w={45}>
                      <BrushIcon />
                    </SmallSlot>
                    Copia formato
                  </SmallRow>
                </SmallColumn>
              </GroupBody>
              <GroupLabel>Appunti</GroupLabel>
              <LaunchIcon />
            </Group>

            <Group $w={724}>
              <GroupBody $col $top={28}>
                <ToolRow $h={55} $mb={26}>
                  <Combo $w={284} $ml={8} $pad={6}>
                    Calibri (Corpo)
                    <Caret />
                  </Combo>
                  <Combo $w={120} $pad={10} $joined>
                    11
                    <Caret />
                  </Combo>
                  <Spot $ml={24}>
                    <GlyphIcon w={29} h={24} size={31} y={24} extra={<path d="M21 5l4-4 4 4" fill="none" stroke={ACCENT} strokeWidth="2.6" />}>
                      <tspan dx="-6">A</tspan>
                    </GlyphIcon>
                  </Spot>
                  <Spot $ml={44}>
                    <GlyphIcon w={29} h={24} size={26} y={24} extra={<path d="M21 1l4 4 4-4" fill="none" stroke={ACCENT} strokeWidth="2.6" />}>
                      <tspan dx="-6">A</tspan>
                    </GlyphIcon>
                  </Spot>
                  <Spot $ml={38}>
                    <GlyphIcon w={36} h={24} size={30} y={24}>Aa</GlyphIcon>
                  </Spot>
                  <Chevron ml={11} />
                  <Spot $ml={25}>
                    <EraseIcon />
                  </Spot>
                </ToolRow>
                <ToolRow $h={53}>
                  <Spot $ml={32}>
                    <GlyphIcon w={21} h={26} size={34} y={26} weight={700}>G</GlyphIcon>
                  </Spot>
                  <Spot $ml={53}>
                    <GlyphIcon w={17} h={26} size={33} y={26} italic>C</GlyphIcon>
                  </Spot>
                  <Spot $ml={53}>
                    <GlyphIcon w={19} h={32} size={32} y={25} extra={<rect y="29" width="19" height="2.6" fill="#444" />}>S</GlyphIcon>
                  </Spot>
                  <Chevron ml={27} />
                  <Spot $ml={25}>
                    <GlyphIcon w={35} h={30} size={30} y={25} extra={<rect y="15" width="35" height="2.4" fill="#444" />}>ab</GlyphIcon>
                  </Spot>
                  <Spot $ml={48}>
                    <GlyphIcon w={23} h={36} size={30} y={24} weight={700} extra={<text x="17" y="35" fontSize="18" fill={ACCENT}>2</text>}>
                      <tspan dx="-5">x</tspan>
                    </GlyphIcon>
                  </Spot>
                  <Spot $ml={50}>
                    <GlyphIcon w={25} h={32} size={30} y={31} weight={700} extra={<text x="17" y="14" fontSize="18" fill={ACCENT}>2</text>}>
                      <tspan dx="-5">x</tspan>
                    </GlyphIcon>
                  </Spot>
                  <Spot $ml={38}>
                    <TextFx />
                  </Spot>
                  <Chevron ml={13} />
                  <Spot $ml={25}>
                    <MarkerIcon />
                  </Spot>
                  <Chevron ml={18} />
                  <Spot $ml={22}>
                    <ColorA />
                  </Spot>
                  <Chevron ml={18} />
                </ToolRow>
              </GroupBody>
              <GroupLabel>Carattere</GroupLabel>
              <LaunchIcon />
            </Group>

            <Group $w={565}>
              <GroupBody $col $top={28}>
                <ToolRow $h={55} $mb={26}>
                  <Spot $ml={22}>
                    <BulletIcon />
                  </Spot>
                  <Chevron ml={20} />
                  <Spot $ml={21}>
                    <NumberIcon />
                  </Spot>
                  <Chevron ml={20} />
                  <Spot $ml={25}>
                    <MultiIcon />
                  </Spot>
                  <Chevron ml={13} />
                  <Spot $ml={29}>
                    <IndentIcon out />
                  </Spot>
                  <Spot $ml={41}>
                    <IndentIcon />
                  </Spot>
                  <Spot $ml={39}>
                    <SortIcon />
                  </Spot>
                  <Spot $ml={42}>
                    <PilcrowIcon />
                  </Spot>
                </ToolRow>
                <ToolRow $h={53}>
                  <ActiveTool>
                    <AlignIcon rows={[[0, 32], [0, 22], [0, 32], [0, 22]]} />
                  </ActiveTool>
                  <Spot $ml={19}>
                    <AlignIcon rows={[[0, 32], [5, 27], [0, 32], [5, 27]]} />
                  </Spot>
                  <Spot $ml={41}>
                    <AlignIcon rows={[[0, 32], [10, 32], [0, 32], [10, 32]]} />
                  </Spot>
                  <Spot $ml={41}>
                    <AlignIcon rows={[[0, 32], [0, 32], [0, 32], [0, 32]]} />
                  </Spot>
                  <Spot $ml={39}>
                    <LineSpaceIcon />
                  </Spot>
                  <Chevron ml={11} />
                  <Spot $ml={23}>
                    <ShadeIcon />
                  </Spot>
                  <Chevron ml={18} />
                  <Spot $ml={22}>
                    <BorderIcon />
                  </Spot>
                  <Chevron ml={20} />
                </ToolRow>
              </GroupBody>
              <GroupLabel>Paragrafo</GroupLabel>
              <LaunchIcon />
            </Group>

            <Group $w={1707}>
              <GroupBody>
                <Gallery>
                  {Styles.map(([sample, name, look, on]) => (
                    <StyleCard key={name} $on={on}>
                      <StylePreview {...look}>{sample}</StylePreview>
                      <StyleName>{name}</StyleName>
                    </StyleCard>
                  ))}
                  <GalleryMore>
                    <Caret size={16} color="#6b6b6b" />
                  </GalleryMore>
                </Gallery>
              </GroupBody>
              <GroupLabel>Stili</GroupLabel>
              <LaunchIcon />
            </Group>

            <Group $w={227}>
              <GroupBody>
                <SmallColumn $ml={23} $top={2}>
                  <SmallRow $h={57}>
                    <SmallSlot $w={44}>
                      <SearchIcon w={34} h={36} color="#3b3b3b" />
                    </SmallSlot>
                    Trova
                    <Chevron ml={29} />
                  </SmallRow>
                  <SmallRow $h={57}>
                    <SmallSlot $w={47}>
                      <ReplaceIcon />
                    </SmallSlot>
                    Sostituisci
                  </SmallRow>
                  <SmallRow $h={57}>
                    <SmallSlot $w={47}>
                      <Spot $ml={6}>
                        <ArrowIcon />
                      </Spot>
                    </SmallSlot>
                    Seleziona
                    <Chevron ml={12} />
                  </SmallRow>
                </SmallColumn>
              </GroupBody>
              <GroupLabel $plain>Modifica</GroupLabel>
            </Group>

            <Group $w={145}>
              <GroupBody>
                <LargeButton $w={114} $ml={16} $top={18}>
                  <MicIcon />
                  <LargeRule $mt={14} />
                  <LargeText>Dettatura</LargeText>
                  <Chevron />
                </LargeButton>
              </GroupBody>
              <GroupLabel $plain>Voce</GroupLabel>
            </Group>

            <RibbonEnd>
              <svg width="24" height="14" viewBox="0 0 24 14">
                <path d="M1 13 12 1l11 12" fill="none" stroke="#444" strokeWidth="2" />
              </svg>
            </RibbonEnd>
          </Groups>
        </Ribbon>

        <Workspace>
          <Canvas>
            <Page />
          </Canvas>
          <ScrollBar>
            <ScrollButton>
              <svg width="20" height="14" viewBox="0 0 20 14">
                <path d="M10 0l10 14H0z" fill="#777" />
              </svg>
            </ScrollButton>
            <ScrollThumb />
            <ScrollTrack />
            <ScrollButton>
              <svg width="14" height="10" viewBox="0 0 14 10">
                <path d="M0 0h14L7 10z" fill="#777" />
              </svg>
            </ScrollButton>
          </ScrollBar>
        </Workspace>

        <StatusBar>
          <StatusText $ml={13}>Pagina 1 di 1</StatusText>
          <StatusText $ml={36}>0 parole</StatusText>
          <StatusText $ml={33}>Italiano (Italia)</StatusText>
          <StatusRight>
            <svg width="33" height="31" viewBox="0 0 33 31">
              <path d="M16.500 4 C11 1 5 1 1 2v26c4-1 10-1 15.500 2 5.500-3 11.500-3 15.500-2V2c-4-1-10-1-15.500 2zM16.500 4v26" fill="none" stroke="#7a7a7a" strokeWidth="1.6" />
              <path d="M5 8h8M5 13h8M5 18h8M5 23h8M20 8h8M20 13h8M20 18h8M20 23h8" stroke="#9a9a9a" strokeWidth="1.6" />
            </svg>
            <ViewActive>
              <svg width="34" height="32" viewBox="0 0 34 32">
                <rect x=".75" y=".75" width="32.500" height="30.500" fill="none" stroke="#666" strokeWidth="1.5" />
                <path d="M6 7h22M6 12h22M6 17h22M6 22h22M6 27h22" stroke="#6a6a6a" strokeWidth="1.6" />
              </svg>
            </ViewActive>
            <Spot $ml={19}>
              <svg width="35" height="33" viewBox="0 0 35 33">
                <rect x=".75" y=".75" width="26" height="27" fill="#f7f7f7" stroke="#7a7a7a" strokeWidth="1.5" />
                <path d="M5 7h17M5 12h17M5 17h10M5 22h10" stroke="#7a7a7a" strokeWidth="1.6" />
                <ellipse cx="25" cy="22" rx="10" ry="11" fill="#8a8a8a" />
                <path d="M22 12c3 3 7 5 5 9s-6 2-5 6l2 5c-6-3-8-7-7-12 1-4 3-6 5-8z" fill="#f3f2f1" />
              </svg>
            </Spot>
            <Spot $ml={27} $mt={-22}>
              <svg width="15" height="4" viewBox="0 0 15 4">
                <rect width="15" height="4" fill="#6a6a6a" />
              </svg>
            </Spot>
            <Slider>
              <SliderMark />
              <SliderThumb />
            </Slider>
            <Spot $ml={8} $mt={-22}>
              <svg width="17" height="17" viewBox="0 0 17 17">
                <path d="M6.500 0h4v6.500H17v4h-6.500V17h-4v-6.500H0v-4h6.500z" fill="#6a6a6a" />
              </svg>
            </Spot>
            <Percent>180%</Percent>
          </StatusRight>
        </StatusBar>

        <TaskBar>
          <TaskCell $w={108}>
            <svg width="32" height="32" viewBox="0 0 32 32">
              <path d="M0 4.500 13.500 2.600v12.600H0zM15 2.400 32 0v15.200H15zM0 16.800h13.500v12.600L0 27.500zM15 16.800h17V32l-17-2.400z" fill="#fff" />
            </svg>
          </TaskCell>
          <TaskCell $w={108}>
            <svg width="39" height="39" viewBox="0 0 39 39">
              <circle cx="19.500" cy="19.500" r="16.500" fill="none" stroke="#fff" strokeWidth="4" />
              <circle cx="19.500" cy="19.500" r="18.700" fill="none" stroke="#8a8a8a" strokeWidth="1.500" />
            </svg>
          </TaskCell>
          <TaskCell $w={108}>
            <svg width="38" height="38" viewBox="0 0 38 38">
              <path d="M0 0v8h24V0M3 13h18v14H3zM0 38v-8h24v8" fill="none" stroke="#fff" strokeWidth="2" />
              <rect x="35.500" width="1.600" height="38" fill="#fff" />
              <circle cx="36" cy="15" r="2.600" fill="#fff" />
            </svg>
          </TaskCell>
          <AppRow>
            {AppIcons.map(([id, icon, on]) => (
              <TaskCell key={id} $on={on}>
                {icon}
              </TaskCell>
            ))}
          </AppRow>
          <Tray>
            <svg width="32" height="34" viewBox="0 0 32 34">
              <circle cx="22" cy="8" r="6.500" fill="none" stroke="#fff" strokeWidth="2" />
              <path d="M13 23c0-6 4-9 9-9s9 3 9 9" fill="none" stroke="#fff" strokeWidth="2" />
              <circle cx="9" cy="15" r="6" fill="#050a10" stroke="#fff" strokeWidth="2" />
              <path d="M1 33c0-7 3-10 8-10s8 3 8 10" fill="none" stroke="#fff" strokeWidth="2" />
            </svg>
            {["#0f78d4", "#ffffff", "#0f78d4"].map((c, i) => (
              <Spot key={i} $ml={i === 0 ? 47 : 17}>
                <svg width="37" height="29" viewBox="0 0 37 29">
                  <path d="M6 29C0 29-1 20 4 17 3 9 11 0 19 5c5-2 9 2 9 7 6 0 9 4 9 9 0 5-3 8-7 8z" fill={c} />
                  <path d="M12 15c-3 2-4 6-3 9" fill="none" stroke="#050a10" strokeWidth="1.500" />
                </svg>
              </Spot>
            ))}
            <Spot $ml={20}>
              <svg width="34" height="36" viewBox="0 0 34 36">
                <path d="M14 0 0 7v11c0 8 6 14 14 17 3-1 6-3 8-5z" fill="#fff" />
                <path d="M0 17h14V0" fill="none" stroke="#050a10" strokeWidth="2" />
                <path d="M14 0l14 7v10H14z" fill="#fff" />
                <circle cx="24" cy="25" r="10" fill="#0f8a3c" />
                <path d="M19 25l4 4 6-8" fill="none" stroke="#fff" strokeWidth="2" />
              </svg>
            </Spot>
            <Spot $ml={18}>
              <svg width="36" height="34" viewBox="0 0 36 34">
                <path d="M5 0v7M11 0v7M1 7h14v8c0 4-3 6-7 6s-7-2-7-6zM8 21v12h26V8H18" fill="none" stroke="#fff" strokeWidth="2.400" />
                <rect x="20" y="12" width="10" height="17" fill="#fff" />
              </svg>
            </Spot>
            <Spot $ml={24}>
              <svg width="28" height="32" viewBox="0 0 28 32">
                <path d="M1 32C1 14 10 3 27 1M8 32C8 20 14 10 27 8M15 32c0-9 5-15 12-16" fill="none" stroke="#c9c9c9" strokeWidth="1.800" />
                <circle cx="24" cy="28" r="3.400" fill="#fff" />
              </svg>
            </Spot>
            <Spot $ml={19}>
              <svg width="34" height="32" viewBox="0 0 34 32">
                <path d="M1 10h7l8-9v30l-8-9H1z" fill="none" stroke="#bdbdbd" strokeWidth="1.800" />
                <path d="M22 10l11 12M33 10 22 22" stroke="#bdbdbd" strokeWidth="1.800" />
              </svg>
            </Spot>
            <Spot $ml={26}>
              <svg width="42" height="40" viewBox="0 0 42 40">
                <path d="M20 26 33 3c3-3 7 0 6 3L26 29l-7 5z" fill="none" stroke="#fff" strokeWidth="2.200" />
                <path d="M12 18C3 22 0 32 4 39M33 18c6 3 5 10-1 12" fill="none" stroke="#fff" strokeWidth="2" />
              </svg>
            </Spot>
            <Spot $ml={17}>
              <svg width="68" height="39" viewBox="0 0 68 39">
                <rect x="1.500" y="1.500" width="65" height="36" rx="1" fill="none" stroke="#fff" strokeWidth="3" />
                <path d="M10 11h48M10 19.500h48M20 28h28" stroke="#fff" strokeWidth="4" strokeDasharray="3 2.500" />
              </svg>
            </Spot>
            <TrayText $ml={26}>ITA</TrayText>
            <Clock>
              <span>09:24:30</span>
              <span>18/08/2018</span>
            </Clock>
            <Spot $ml={43}>
              <svg width="36" height="38" viewBox="0 0 36 38">
                <path d="M1.500 1.500h33v28H24l-6 6-6-6H1.500z" fill="none" stroke="#fff" strokeWidth="2.400" />
              </svg>
            </Spot>
            <Spot $ml={45} />
          </Tray>
        </TaskBar>
      </Shell>
    </>
  );
}
